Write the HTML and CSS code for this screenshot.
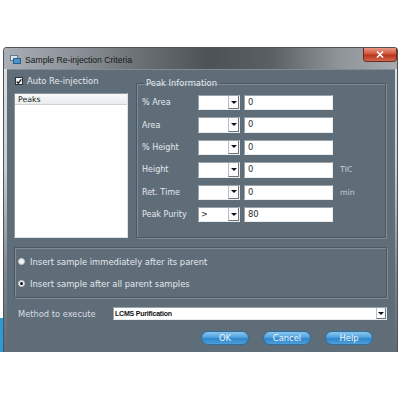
FILE: index.html
```html
<!DOCTYPE html>
<html>
<head>
<meta charset="utf-8">
<link rel="stylesheet" href="styles.css">
</head>
<body>
<div class="page">
  <div class="strip"></div>
  <div class="window">
    <div class="titlebar">
      <svg class="appicon" width="11" height="9" viewBox="0 0 11 9">
        <rect x="0.5" y="0.5" width="7" height="5" fill="#d9e6ef" stroke="#5d7a90"/>
        <rect x="3.5" y="3.5" width="7" height="5" fill="#4d93c8" stroke="#2d5f86"/>
      </svg>
      <span class="title">Sample Re-injection Criteria</span>
      <div class="close">
        <svg width="8" height="7" viewBox="0 0 8 7"><path d="M1 0.5 L7 6.5 M7 0.5 L1 6.5" stroke="#fff" stroke-width="1.6"/></svg>
      </div>
    </div>
    <div class="body">
      <div class="top">
        <div class="left">
          <div class="check">
            <span class="cbox"><svg width="7" height="7" viewBox="0 0 7 7"><path d="M0.8 3.6 L2.6 5.6 L6.2 1" fill="none" stroke="#111" stroke-width="1.6"/></svg></span>
            <span>Auto Re-injection</span>
          </div>
          <div class="list">
            <div class="list-head">Peaks</div>
          </div>
        </div>
        <fieldset class="peak">
          <legend>Peak Information</legend>
          <div class="grid">
            <span class="lbl">% Area</span>
            <span class="combo"><span class="cval"></span><span class="arrow"></span></span>
            <span class="input">0</span>
            <span class="unit"></span>

            <span class="lbl">Area</span>
            <span class="combo"><span class="cval"></span><span class="arrow"></span></span>
            <span class="input">0</span>
            <span class="unit"></span>

            <span class="lbl">% Height</span>
            <span class="combo"><span class="cval"></span><span class="arrow"></span></span>
            <span class="input">0</span>
            <span class="unit"></span>

            <span class="lbl">Height</span>
            <span class="combo"><span class="cval"></span><span class="arrow"></span></span>
            <span class="input">0</span>
            <span class="unit">TIC</span>

            <span class="lbl">Ret. Time</span>
            <span class="combo"><span class="cval"></span><span class="arrow"></span></span>
            <span class="input">0</span>
            <span class="unit">min</span>

            <span class="lbl">Peak Purity</span>
            <span class="combo"><span class="cval">&gt;</span><span class="arrow"></span></span>
            <span class="input">80</span>
            <span class="unit"></span>
          </div>
        </fieldset>
      </div>
      <fieldset class="radios">
        <div class="radio"><span class="rdot"></span><span>Insert sample immediately after its parent</span></div>
        <div class="radio"><span class="rdot on"></span><span>Insert sample after all parent samples</span></div>
      </fieldset>
      <div class="method">
        <span class="mlbl">Method to execute</span>
        <span class="mcombo"><span class="mval">LCMS Purification</span><span class="arrow"></span></span>
      </div>
      <div class="buttons">
        <span class="btn">OK</span>
        <span class="btn">Cancel</span>
        <span class="btn">Help</span>
      </div>
    </div>
  </div>
</div>
</body>
</html>
```
FILE: styles.css
```css
* { box-sizing: border-box; }
html, body { margin: 0; padding: 0; background: #ffffff; }
body {
  font-family: "DejaVu Sans", Verdana, sans-serif;
  font-size: 7.5px;
  color: #e4e9ed;
}
.page {
  display: flex;
  align-items: flex-end;
  padding-top: 47px;
  height: 352px;
}
.strip {
  width: 3px;
  height: 34px;
  background: #2a9ad8;
}
.window {
  width: 395px;
  height: 305px;
  display: flex;
  flex-direction: column;
  border: 1px solid #4e5358;
  border-bottom: none;
  border-radius: 4px 4px 0 0;
  background: linear-gradient(180deg, #dfe3e6 0%, #c9ced3 40%, #7d838b 75%, #646a72 100%);
}
.titlebar {
  height: 21px;
  display: flex;
  align-items: flex-start;
  background: linear-gradient(90deg, #a9afb4 0%, #8c9297 18%, #6a6f74 35%, #4d5256 52%, #5a5f63 68%, #8f9498 85%, #a7abaf 100%);
  border-radius: 3px 3px 0 0;
}
.appicon { margin: 7px 0 0 6px; }
.title {
  margin: 7px 0 0 4px;
  font-family: "Liberation Sans", Arial, sans-serif;
  font-size: 8.6px;
  color: #15181b;
  flex: 1;
}
.close {
  width: 34px;
  height: 14px;
  display: flex;
  align-items: center;
  justify-content: center;
  background: linear-gradient(180deg, #e79a86 0%, #d0563b 45%, #b8331c 55%, #d06a4e 100%);
  border: 1px solid #6e2a20;
  border-top: none;
  border-radius: 0 0 4px 4px;
}
.body {
  flex: 1;
  margin: 0 2px 0 3px;
  background: #5f6d79;
  border-top: 1px solid #7f8c96;
  padding: 6px 8px 0 7px;
  display: flex;
  flex-direction: column;
}
.top {
  display: flex;
  gap: 8px;
}
.left {
  width: 114px;
  display: flex;
  flex-direction: column;
}
.check {
  height: 10px;
  display: flex;
  align-items: center;
  gap: 4px;
  padding-left: 1px;
  font-size: 8.4px;
}
.cbox {
  width: 8px;
  height: 8px;
  background: #f4f4f4;
  border: 1px solid #2c3338;
  display: flex;
  align-items: center;
  justify-content: center;
}
.list {
  margin-top: 7px;
  height: 145px;
  background: #ffffff;
  border: 1px solid #8a959e;
  border-right-color: #dde2e5;
  border-bottom-color: #dde2e5;
}
.list-head {
  height: 11px;
  line-height: 11px;
  padding-left: 3px;
  color: #1b1b1b;
  font-size: 7.8px;
  background: linear-gradient(180deg, #fafafa, #e9ebed);
  border-bottom: 1px solid #cdd2d6;
}
fieldset {
  margin: 0;
  border: 1px solid #4b5863;
  box-shadow: 1px 1px 0 #7f8c97, inset 1px 1px 0 #7f8c97;
  border-radius: 1px;
}
.peak {
  margin-top: 3px;
  width: 250px;
  height: 159px;
  padding: 7px 4px 0 5px;
}
.peak legend {
  padding: 0 2px;
  margin-left: 2px;
  font-size: 8.4px;
  line-height: 9px;
}
.grid {
  display: grid;
  grid-template-columns: 56px 42px 93px 1fr;
  grid-auto-rows: 15.4px;
  row-gap: 7px;
  align-items: center;
}
.lbl { font-size: 8px; }
.combo {
  height: 15.4px;
  display: flex;
  background: #ffffff;
  border: 1px solid #9aa3aa;
  border-right-color: #e9ecee;
  border-bottom-color: #e9ecee;
}
.cval {
  flex: 1;
  color: #222;
  padding-left: 2px;
  line-height: 13px;
  font-size: 8px;
}
.arrow {
  width: 11px;
  display: flex;
  align-items: center;
  justify-content: center;
  background: #fbfbfb;
  border-left: 1px solid #b9c0c5;
  border-bottom: 1px solid #6c757c;
  border-right: 1px solid #6c757c;
}
.arrow::after {
  content: "";
  border-left: 3px solid transparent;
  border-right: 3px solid transparent;
  border-top: 3px solid #111;
}
.input {
  margin-left: 4px;
  height: 15.4px;
  line-height: 13px;
  padding-left: 3px;
  color: #2b2b2b;
  font-size: 8.4px;
  background: #ffffff;
  border: 1px solid #9aa3aa;
  border-right-color: #e9ecee;
  border-bottom-color: #e9ecee;
}
.unit {
  margin-left: 7px;
  color: #c9d0d6;
  font-size: 7.8px;
}
.radios {
  margin-top: 9px;
  width: 373px;
  height: 51px;
  padding: 9px 0 0 3px;
  display: flex;
  flex-direction: column;
  gap: 13px;
}
.radio {
  display: flex;
  align-items: center;
  gap: 5px;
  height: 9px;
  font-size: 8.4px;
}
.rdot {
  width: 7px;
  height: 7px;
  border-radius: 50%;
  background: #f3f3f3;
  border: 1px solid #c0c6cb;
  display: flex;
  align-items: center;
  justify-content: center;
}
.rdot.on::after {
  content: "";
  width: 3px;
  height: 3px;
  border-radius: 50%;
  background: #111;
}
.method {
  margin-top: 9px;
  display: flex;
  align-items: center;
  padding-left: 4px;
}
.mlbl {
  width: 95px;
  font-size: 8.3px;
  color: #d7dde2;
}
.mcombo {
  flex: 1;
  height: 13px;
  display: flex;
  background: #ffffff;
  border: 1px solid #9aa3aa;
  border-right-color: #e9ecee;
  border-bottom-color: #e9ecee;
}
.mval {
  flex: 1;
  color: #111;
  font-family: "Liberation Sans", Arial, sans-serif;
  font-size: 7px;
  font-weight: bold;
  letter-spacing: -0.2px;
  line-height: 11px;
  padding-left: 1px;
}
.mcombo .arrow { width: 10px; }
.buttons {
  margin-top: 11px;
  display: flex;
  justify-content: flex-end;
  gap: 14px;
  padding-right: 14px;
}
.btn {
  width: 48px;
  height: 14px;
  border-radius: 7px;
  display: flex;
  align-items: center;
  justify-content: center;
  color: #eef5fb;
  font-size: 8.4px;
  background: linear-gradient(180deg, #8cc6ee 0%, #4fa2de 45%, #2f86cb 55%, #4d9fda 100%);
  border: 1px solid #2f6d9d;
}
```
